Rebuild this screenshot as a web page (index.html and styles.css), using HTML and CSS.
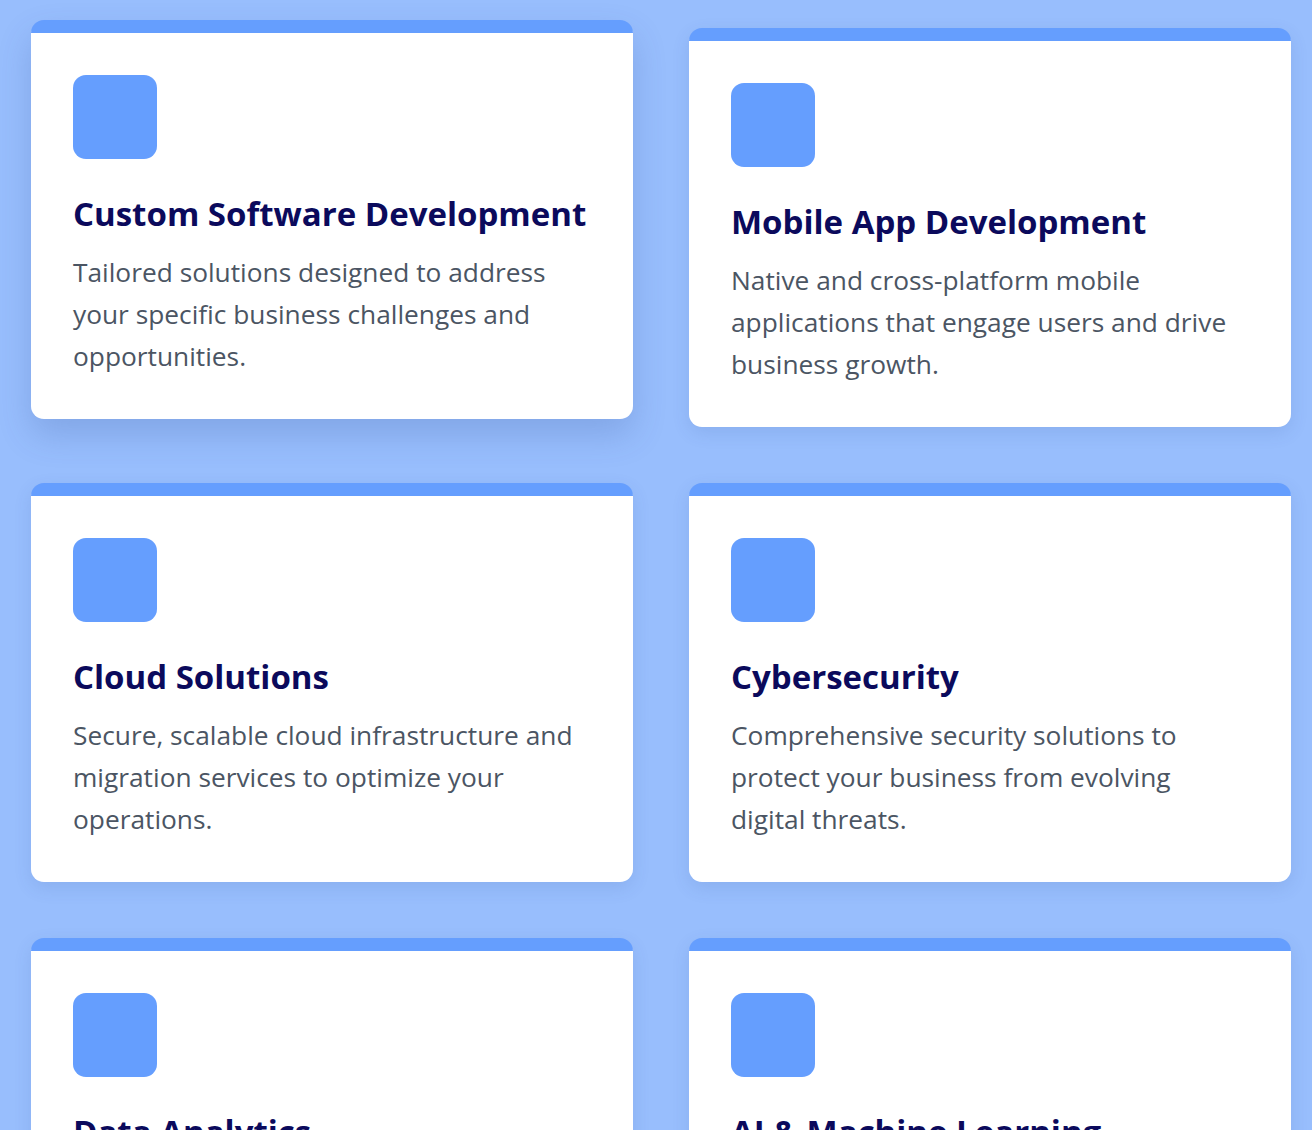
FILE: index.html
```html
<!DOCTYPE html>
<html lang="en">
<head>
<meta charset="utf-8">
<title>Services</title>
<link rel="stylesheet" href="styles.css">
</head>
<body>
<main class="services">
  <article class="card lifted">
    <div class="icon"></div>
    <h3 class="title">Custom Software Development</h3>
    <p class="desc">Tailored solutions designed to address your specific business challenges and opportunities.</p>
  </article>
  <article class="card">
    <div class="icon"></div>
    <h3 class="title">Mobile App Development</h3>
    <p class="desc">Native and cross-platform mobile applications that engage users and drive business growth.</p>
  </article>
  <article class="card">
    <div class="icon"></div>
    <h3 class="title">Cloud Solutions</h3>
    <p class="desc">Secure, scalable cloud infrastructure and migration services to optimize your operations.</p>
  </article>
  <article class="card">
    <div class="icon"></div>
    <h3 class="title">Cybersecurity</h3>
    <p class="desc">Comprehensive security solutions to protect your business from evolving digital threats.</p>
  </article>
  <article class="card">
    <div class="icon"></div>
    <h3 class="title">Data Analytics</h3>
    <p class="desc">Turn your data into actionable insights that drive smarter business decisions.</p>
  </article>
  <article class="card">
    <div class="icon"></div>
    <h3 class="title">AI &amp; Machine Learning</h3>
    <p class="desc">Intelligent solutions that automate processes and unlock new opportunities.</p>
  </article>
</main>
</body>
</html>
```

FILE: styles.css
```css
html, body {
  margin: 0;
  padding: 0;
}
body {
  background: #98befd;
  font-family: "Open Sans", "Noto Sans", sans-serif;
}
.services {
  display: grid;
  grid-template-columns: 602px 602px;
  column-gap: 56px;
  row-gap: 56px;
  padding: 28px 21px 40px 31px;
}
.card {
  background: #ffffff;
  border-top: 13.5px solid #659efe;
  border-radius: 13px;
  padding: 42px 42px 42px 42px;
  box-shadow: 0 6px 18px rgba(40, 70, 140, 0.12);
}
.card.lifted {
  transform: translateY(-8px);
  box-shadow: 0 16px 34px rgba(40, 70, 140, 0.2);
}
.icon {
  width: 84px;
  height: 84px;
  border-radius: 13px;
  background: #659efe;
  margin-bottom: 33px;
}
.title {
  margin: 0 0 15px 0;
  font-size: 33px;
  line-height: 44px;
  font-weight: 700;
  color: #0b0a5c;
}
.desc {
  margin: 0;
  font-size: 26.3px;
  line-height: 42px;
  color: #4b5563;
}
```
